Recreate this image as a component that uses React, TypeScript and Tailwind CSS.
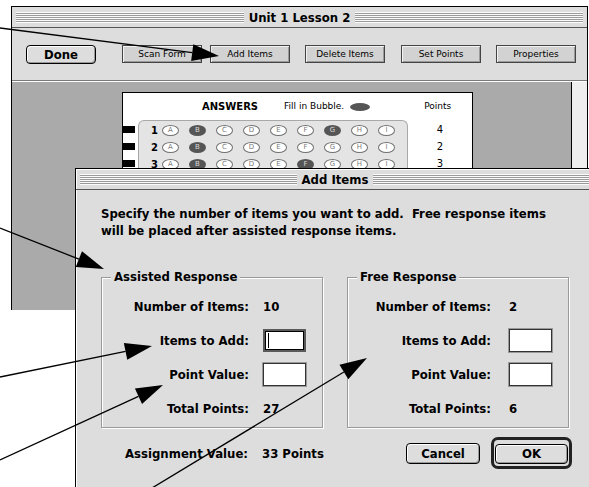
import clsx from 'clsx'

const charcoal = "font-['DejaVu_Sans_Condensed','DejaVu_Sans',sans-serif] font-bold"
const geneva = "font-['DejaVu_Sans',sans-serif]"

const Stripes = () => (
    <div className="h-[11px] flex-1 bg-[repeating-linear-gradient(180deg,#fbfbfb_0px,#fbfbfb_1px,#9a9a9a_1px,#9a9a9a_2px)]" />
)

const TitleBar = ({ title }: { title: string }) => (
    <div className="flex h-[21px] shrink-0 items-center border-b border-[#555] px-[4px]">
        <Stripes />
        <span className={clsx(charcoal, 'px-[5px] text-[13px] leading-none')}>{title}</span>
        <Stripes />
    </div>
)

const ToolButton = ({ label, className }: { label: string; className?: string }) => (
    <button
        className={clsx(
            geneva,
            'h-[18px] w-[80px] border border-[#444] bg-[#d2d2d2] text-[9px] leading-none shadow-[inset_1px_1px_0_#f2f2f2,inset_-1px_-1px_0_#9a9a9a]',
            className
        )}
    >
        {label}
    </button>
)

const letters = ['A', 'B', 'C', 'D', 'E', 'F', 'G', 'H', 'I']

const rows = [
    { n: 1, filled: ['B', 'G'], points: 4 },
    { n: 2, filled: ['B'], points: 2 },
    { n: 3, filled: ['B', 'F'], points: 3 }
]

const Bubble = ({ letter, filled }: { letter: string; filled: boolean }) => (
    <span
        className={clsx(
            geneva,
            'flex h-[11px] w-[17px] items-center justify-center rounded-[50%] text-[7px] leading-none',
            filled ? 'bg-[#555555] text-[#d8d8d8]' : 'border border-[#707070] bg-white text-[#7a7a7a]'
        )}
    >
        {letter}
    </span>
)

const AnswerSheet = () => (
    <div className="ml-[110px] mt-[10px] h-[240px] w-[351px] border border-black bg-white">
        <div className="flex h-[27px] items-center pl-[79px]">
            <span className={clsx(geneva, 'text-[10px] font-bold leading-none')}>ANSWERS</span>
            <span className={clsx(geneva, 'ml-[26px] text-[9px] leading-none')}>Fill in Bubble.</span>
            <span className="ml-[6px] h-[8px] w-[20px] rounded-[50%] bg-[#555555]" />
            <span className={clsx(geneva, 'ml-[54px] text-[9px] leading-none')}>Points</span>
        </div>
        <div className="flex">
            <div className="flex w-[15px] flex-col pt-[1px]">
                {rows.map((r) => (
                    <div key={r.n} className="flex h-[17px] items-center">
                        <span className="h-[7px] w-[12px] bg-black" />
                    </div>
                ))}
            </div>
            <div className="h-[120px] w-[270px] rounded-t-[6px] border border-b-0 border-[#a8a8a8] bg-[#e4e4e4] pl-[12px] pt-[1px]">
                {rows.map((r) => (
                    <div key={r.n} className="flex h-[17px] items-center">
                        <span className={clsx(geneva, 'w-[11px] text-[10px] font-bold leading-none')}>{r.n}</span>
                        <div className="flex gap-[10px]">
                            {letters.map((l) => (
                                <Bubble key={l} letter={l} filled={r.filled.includes(l)} />
                            ))}
                        </div>
                    </div>
                ))}
            </div>
            <div className="flex w-[64px] flex-col pt-[1px]">
                {rows.map((r) => (
                    <div key={r.n} className={clsx(geneva, 'flex h-[17px] items-center justify-center text-[10px]')}>
                        {r.points}
                    </div>
                ))}
            </div>
        </div>
    </div>
)

const EditBox = ({ focused }: { focused?: boolean }) => (
    <div
        className={clsx(
            'relative h-[23px] w-[43px] bg-white',
            focused ? 'border-2 border-[#5a5a5a] shadow-[inset_0_0_0_1px_#000]' : 'border border-[#333] shadow-[0_0_0_1px_#9a9a9a]'
        )}
    >
        {focused && <span className="absolute left-[3px] top-[2px] h-[15px] w-[1px] bg-black" />}
    </div>
)

const GroupBox = ({
    title,
    number,
    total,
    labelWidth,
    gap,
    focused
}: {
    title: string
    number: number
    total: number
    labelWidth: string
    gap: string
    focused?: boolean
}) => (
    <div className="relative h-[151px] w-[222px] border border-[#9a9a9a] pt-[11px] shadow-[inset_1px_1px_0_#fff,1px_1px_0_#fff]">
        <span className="absolute -top-[9px] left-[9px] bg-[#dddddd] px-[3px] text-[13px] leading-[16px]">{title}</span>
        {[
            ['Number of Items:', number],
            ['Items to Add:', 'input-focus'],
            ['Point Value:', 'input'],
            ['Total Points:', total]
        ].map(([label, value]) => (
            <div key={label} className={clsx('flex h-[34px] items-center', gap)}>
                <span className={clsx('text-right text-[13px] leading-none', labelWidth)}>{label}</span>
                {value === 'input-focus' ? (
                    <EditBox focused={focused} />
                ) : value === 'input' ? (
                    <EditBox />
                ) : (
                    <span className="text-[13px] leading-none">{value}</span>
                )}
            </div>
        ))}
    </div>
)

const arrows = [
    { x1: 0, y1: 28, x2: 219, y2: 56 },
    { x1: 0, y1: 228, x2: 104, y2: 269 },
    { x1: 0, y1: 377, x2: 152, y2: 346 },
    { x1: 0, y1: 460, x2: 163, y2: 385 },
    { x1: 152, y1: 488, x2: 367, y2: 358 }
]

const Arrows = () => (
    <svg className="pointer-events-none absolute inset-0" width="589" height="487">
        {arrows.map((a, i) => {
            let dx = a.x2 - a.x1
            let dy = a.y2 - a.y1
            let len = Math.hypot(dx, dy)
            let ux = dx / len
            let uy = dy / len
            let bx = a.x2 - ux * 27
            let by = a.y2 - uy * 27
            let w = 8.5
            return (
                <g key={i}>
                    <line x1={a.x1} y1={a.y1} x2={bx} y2={by} stroke="#000" strokeWidth="1.3" />
                    <polygon
                        points={`${a.x2},${a.y2} ${bx - uy * w},${by + ux * w} ${bx + uy * w},${by - ux * w}`}
                        fill="#000"
                    />
                </g>
            )
        })}
    </svg>
)

const App = () => (
    <div className="relative h-[487px] w-[589px] overflow-hidden bg-white">
        {/* back window */}
        <div className="absolute left-[11px] top-[6px] flex h-[304px] w-[577px] flex-col border-x border-t border-black bg-[#dddddd]">
            <TitleBar title="Unit 1 Lesson 2" />
            <div className="flex h-[53px] shrink-0 items-center border-b border-[#7a7a7a] pl-[14px]">
                <button
                    className={clsx(
                        charcoal,
                        'h-[19px] w-[70px] rounded-[4px] border border-black bg-[#dddddd] text-[13px] leading-none shadow-[inset_1px_1px_0_#fff,inset_-1px_-1px_0_#999]'
                    )}
                >
                    Done
                </button>
                <ToolButton label="Scan Form" className="ml-[26px]" />
                <ToolButton label="Add Items" className="ml-[8px]" />
                <ToolButton label="Delete Items" className="ml-[15px]" />
                <ToolButton label="Set Points" className="ml-[16px]" />
                <ToolButton label="Properties" className="ml-[15px]" />
            </div>
            <div className="flex min-h-0 flex-1 border-t border-white bg-[#aaaaaa]">
                <div className="min-w-0 flex-1 overflow-hidden">
                    <AnswerSheet />
                </div>
                <div className="w-[16px] border-l border-black bg-[#eeeeee]" />
            </div>
        </div>

        {/* Add Items dialog */}
        <div
            className={clsx(
                charcoal,
                'absolute left-[75px] top-[168px] flex h-[320px] w-[520px] flex-col border border-black bg-[#dddddd] shadow-[inset_1px_1px_0_#fff]'
            )}
        >
            <TitleBar title="Add Items" />
            <div className="pl-[25px] pt-[15px]">
                <p className="text-[13px] leading-[17px]">
                    Specify the number of items you want to add.&nbsp; Free response items
                    <br />
                    will be placed after assisted response items.
                </p>
                <div className="mt-[38px] flex gap-[24px]">
                    <GroupBox
                        title="Assisted Response"
                        number={10}
                        total={27}
                        labelWidth="w-[147px]"
                        gap="gap-[14px]"
                        focused
                    />
                    <GroupBox title="Free Response" number={2} total={6} labelWidth="w-[143px]" gap="gap-[18px]" />
                </div>
                <div className="mt-[10px] flex h-[30px] items-center">
                    <span className="w-[147px] text-right text-[13px] leading-none">Assignment Value:</span>
                    <span className="ml-[14px] w-[144px] text-[13px] leading-none">33 Points</span>
                    <button className="h-[21px] w-[74px] rounded-[4px] border border-black bg-[#dddddd] text-[13px] leading-none shadow-[inset_1px_1px_0_#fff,inset_-1px_-1px_0_#999]">
                        Cancel
                    </button>
                    <div className="ml-[11px] rounded-[7px] border-[3px] border-[#222] p-[1px]">
                        <button className="h-[20px] w-[73px] rounded-[4px] border border-black bg-[#dddddd] text-[13px] leading-none shadow-[inset_1px_1px_0_#fff,inset_-1px_-1px_0_#999]">
                            OK
                        </button>
                    </div>
                </div>
            </div>
        </div>

        <Arrows />
    </div>
)

export default App
